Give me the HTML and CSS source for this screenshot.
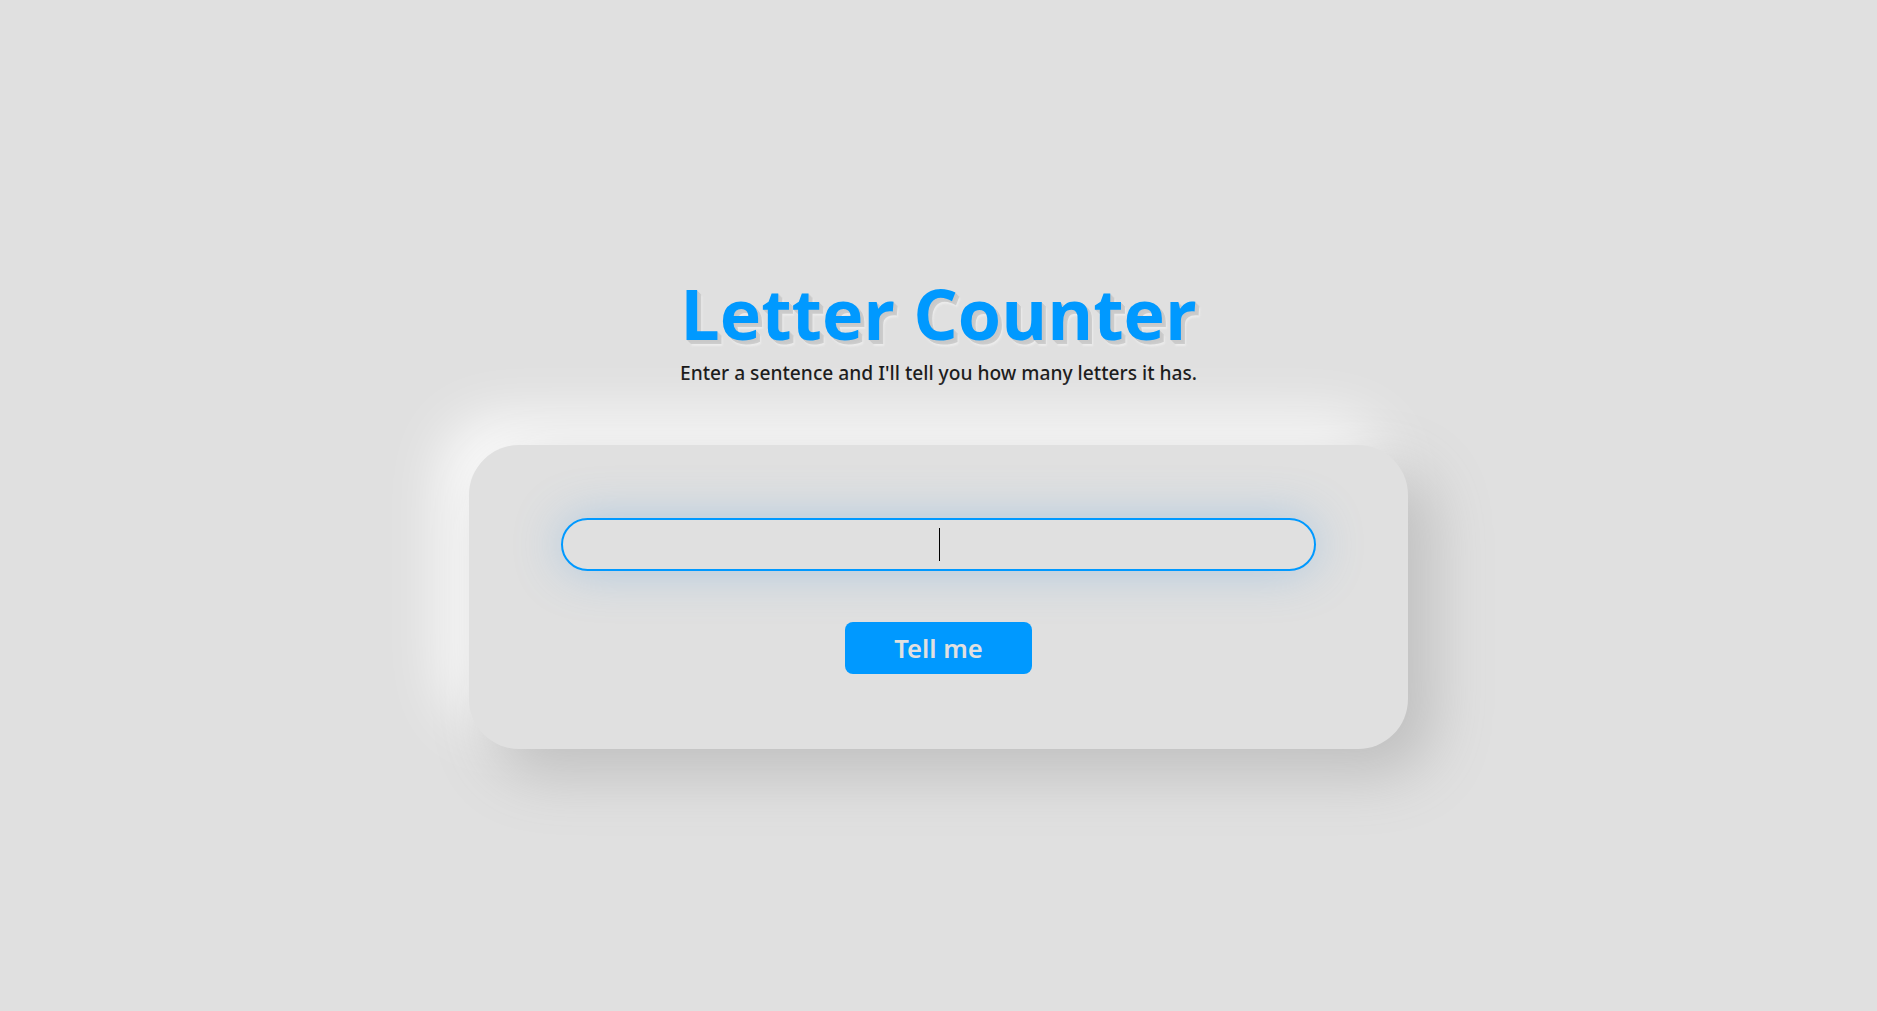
FILE: index.html
```html
<!DOCTYPE html>
<html lang="en">
<head>
<meta charset="utf-8">
<title>Letter Counter</title>
<link rel="stylesheet" href="styles.css">
</head>
<body>
<main class="page">
  <h1 class="title">Letter Counter</h1>
  <p class="subtitle">Enter a sentence and I'll tell you how many letters it has.</p>
  <section class="card">
    <div class="field-wrap">
      <input class="field" type="text" aria-label="Sentence">
      <span class="caret"></span>
    </div>
    <button class="btn" type="button">Tell me</button>
  </section>
</main>
</body>
</html>
```
FILE: styles.css
```css
html, body {
  margin: 0;
  padding: 0;
  background: #e0e0e0;
  font-family: "Open Sans", "Noto Sans", sans-serif;
}

.page {
  min-height: 100vh;
  display: flex;
  flex-direction: column;
  align-items: center;
  justify-content: center;
  box-sizing: border-box;
  padding-top: 6px;
}

.title {
  margin: 0;
  font-size: 70px;
  font-weight: 700;
  line-height: 1.3;
  color: #0099ff;
  text-shadow: 1px 1px 0 #c9c9c9, 2px 2px 0 #c9c9c9, 3px 3px 0 #cbcbcb, 4px 4px 0 #cdcdcd, 5px 6px 2px #ececec;
}

.subtitle {
  margin: 0;
  font-family: "Noto Sans", "Open Sans", sans-serif;
  font-size: 19.2px;
  font-weight: 500;
  color: #121212;
}

.card {
  margin-top: 59px;
  width: 50%;
  box-sizing: border-box;
  padding: 73px 92px 75px;
  border-radius: 50px;
  background: #e0e0e0;
  box-shadow: 24px 24px 60px #bebebe, -24px -24px 60px #ffffff;
  display: flex;
  flex-direction: column;
  align-items: center;
  gap: 51px;
}

.field-wrap {
  position: relative;
  width: 100%;
}

.field {
  display: block;
  width: 100%;
  height: 53px;
  box-sizing: border-box;
  border: 2px solid #0099ff;
  border-radius: 27px;
  background: #e0e0e0;
  text-align: center;
  font-family: inherit;
  font-size: 22px;
  color: #111;
  outline: none;
  box-shadow: 0 0 48px rgba(80, 155, 220, 0.35);
}

.caret {
  position: absolute;
  left: 50%;
  top: 10px;
  width: 1px;
  height: 33px;
  background: #000;
}

.btn {
  width: 187px;
  height: 52px;
  border: none;
  border-radius: 8px;
  background: #0099ff;
  color: #e0e0e0;
  font-family: "Noto Sans", "Open Sans", sans-serif;
  font-size: 25.6px;
  font-weight: 600;
  cursor: pointer;
}
```
